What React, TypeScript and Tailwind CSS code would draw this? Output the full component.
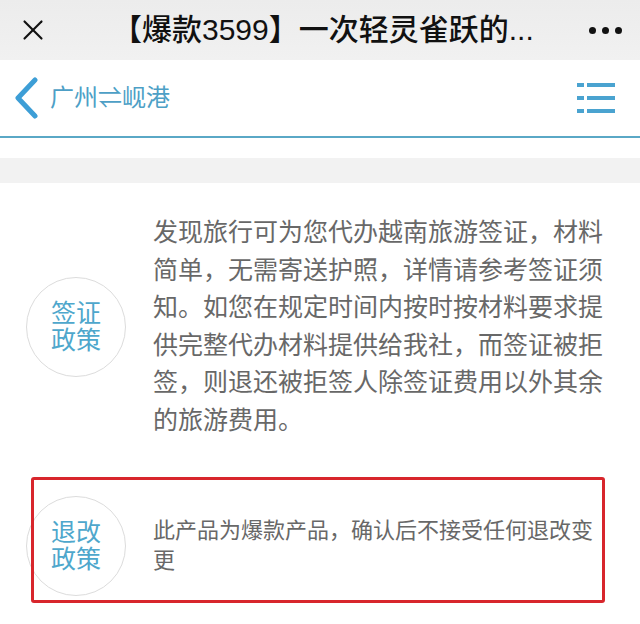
import { X } from "lucide-react";

const cjk = { fontFamily: '"Liberation Sans", "Noto Sans CJK SC", sans-serif' };

function PolicyBadge({ top, bottom }: { top: string; bottom: string }) {
  return (
    <div className="w-[100px] h-[100px] shrink-0 rounded-full border-[1.5px] border-[#dcdcdc] flex flex-col items-center justify-center text-[25px] leading-[27px] text-[#4ea7cc]">
      <span>{top}</span>
      <span>{bottom}</span>
    </div>
  );
}

export default function App() {
  return (
    <div className="w-[640px] h-[624px] overflow-hidden bg-white" style={cjk}>
      {/* wechat title bar */}
      <div className="h-[60px] flex items-center bg-gradient-to-b from-[#ececec] to-[#f1f1f1]">
        <div className="w-[66px] flex justify-center">
          <X className="w-[34px] h-[34px] text-[#111]" strokeWidth={1.5} />
        </div>
        <h1 className="flex-1 text-[30px] font-medium text-[#111] pl-[46px] leading-none">
          【爆款3599】一次轻灵雀跃的...
        </h1>
        <div className="flex gap-[6px] pr-[18px]">
          <span className="w-[7px] h-[7px] rounded-full bg-[#111]" />
          <span className="w-[7px] h-[7px] rounded-full bg-[#111]" />
          <span className="w-[7px] h-[7px] rounded-full bg-[#111]" />
        </div>
      </div>

      {/* route nav */}
      <div className="h-[78px] flex items-center justify-between bg-white border-b-2 border-[#5aa8c6]">
        <div className="flex items-center pl-[13px] gap-[11px]">
          <svg width="26" height="42" viewBox="0 0 26 42">
            <path d="M22 3 L5 21 L22 39" fill="none" stroke="#3d9ed6" strokeWidth="5" strokeLinecap="round" strokeLinejoin="round" />
          </svg>
          <span className="text-[24px] text-[#4d9fc6]">广州⇌岘港</span>
        </div>
        <svg width="38" height="32" viewBox="0 0 38 32" className="mr-[25px]">
          <g fill="#4aa3d0">
            <rect x="0" y="1" width="7" height="4" />
            <rect x="10" y="1" width="28" height="4" />
            <rect x="0" y="14" width="7" height="4" />
            <rect x="10" y="14" width="28" height="4" />
            <rect x="0" y="27" width="7" height="4" />
            <rect x="10" y="27" width="28" height="4" />
          </g>
        </svg>
      </div>

      <div className="h-[20px]" />
      <div className="h-[25px] bg-[#f2f2f2]" />

      {/* visa policy */}
      <div className="flex items-center pt-[31px] pl-[26px] gap-[27px]">
        <PolicyBadge top="签证" bottom="政策" />
        <p className="w-[452px] text-[25px] leading-[37.5px] text-[#686868]">
          发现旅行可为您代办越南旅游签证，材料简单，无需寄送护照，详情请参考签证须知。如您在规定时间内按时按材料要求提供完整代办材料提供给我社，而签证被拒签，则退还被拒签人除签证费用以外其余的旅游费用。
        </p>
      </div>

      {/* refund policy */}
      <div className="relative flex items-center mt-[57px] pl-[26px] gap-[27px]">
        <PolicyBadge top="退改" bottom="政策" />
        <p className="w-[452px] text-[22px] leading-[30px] text-[#686868]">
          此产品为爆款产品，确认后不接受任何退改变更
        </p>
        <div className="absolute left-[31px] right-[35px] top-[-19px] bottom-[-7px] border-[3px] border-[#d8262c] rounded-[3px]" />
      </div>
    </div>
  );
}
